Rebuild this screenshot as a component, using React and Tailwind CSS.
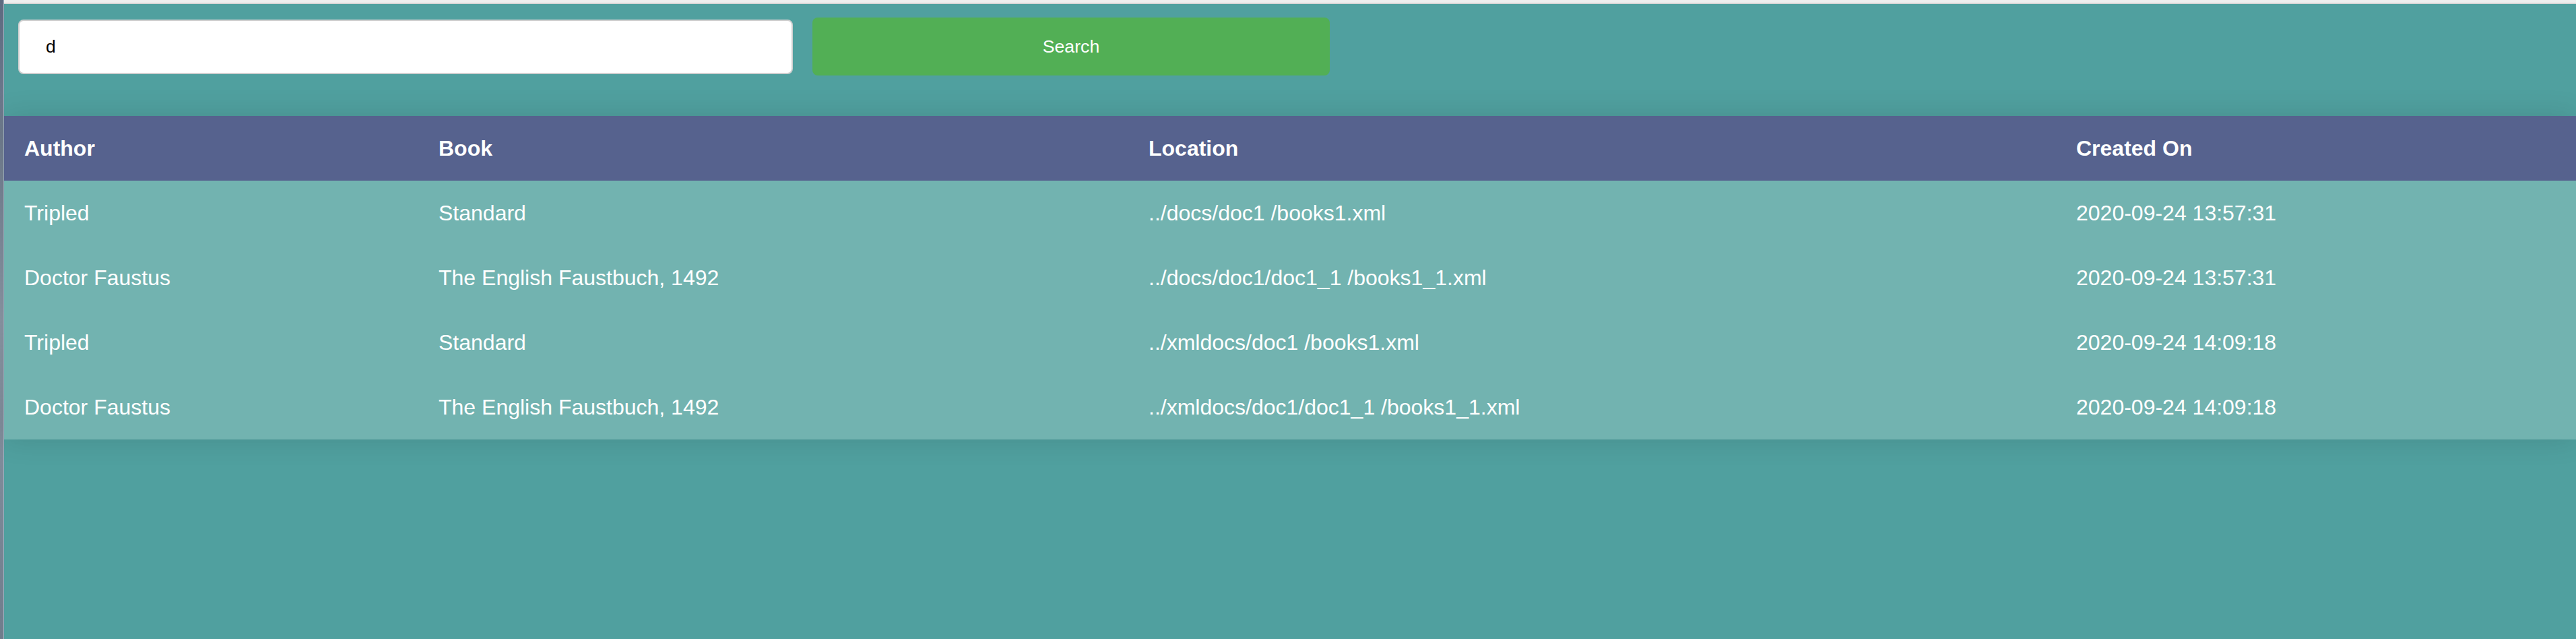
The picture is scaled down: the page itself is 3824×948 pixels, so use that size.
import React from "react";

const rows = [
  ["Tripled", "Standard", "../docs/doc1 /books1.xml", "2020-09-24 13:57:31"],
  ["Doctor Faustus", "The English Faustbuch, 1492", "../docs/doc1/doc1_1 /books1_1.xml", "2020-09-24 13:57:31"],
  ["Tripled", "Standard", "../xmldocs/doc1 /books1.xml", "2020-09-24 14:09:18"],
  ["Doctor Faustus", "The English Faustbuch, 1492", "../xmldocs/doc1/doc1_1 /books1_1.xml", "2020-09-24 14:09:18"],
];

export default function App() {
  return (
    <div className="flex h-[948px] w-full overflow-hidden" style={{ fontFamily: '"Liberation Sans", Arial, sans-serif' }}>
      <div className="w-[6px] shrink-0 bg-gradient-to-b from-[#5d6b80] via-[#8b97a5] to-[#6f7d8c] border-r border-[#9fb0bf]" />
      <div className="flex flex-1 flex-col">
        <div className="h-[6px] shrink-0 bg-[#eeeeee] border-b-2 border-[#d6d6d6]" />
        <div className="flex-1 bg-[#50a09f]">
          <div className="flex items-center pl-[21px] pt-[20px] h-[106px]">
            <div className="flex h-[81px] w-[1150px] items-center rounded-[8px] border-2 border-[#cfcfcf] bg-white pl-[39px] text-[26.67px] text-black">
              d
            </div>
            <button className="ml-[29px] h-[86px] w-[768px] rounded-[8px] bg-[#52af55] text-[26.67px] text-white">
              Search
            </button>
          </div>
          <div className="mt-[60px] shadow-[0_0_40px_rgba(0,0,0,0.12)]">
            <table className="w-full table-fixed border-collapse text-[32px] text-white">
              <thead>
                <tr className="h-[96px] bg-[#56628e]">
                  <th className="w-[615px] pl-[30px] text-left font-bold">Author</th>
                  <th className="w-[1054px] pl-[30px] text-left font-bold">Book</th>
                  <th className="w-[1377px] pl-[30px] text-left font-bold">Location</th>
                  <th className="pl-[30px] text-left font-bold">Created On</th>
                </tr>
              </thead>
              <tbody>
                {rows.map((r, i) => (
                  <tr key={i} className="h-[96px] bg-[#72b3b0]">
                    {r.map((c, j) => (
                      <td key={j} className="pl-[30px] text-left font-normal">{c}</td>
                    ))}
                  </tr>
                ))}
              </tbody>
            </table>
          </div>
        </div>
      </div>
    </div>
  );
}
